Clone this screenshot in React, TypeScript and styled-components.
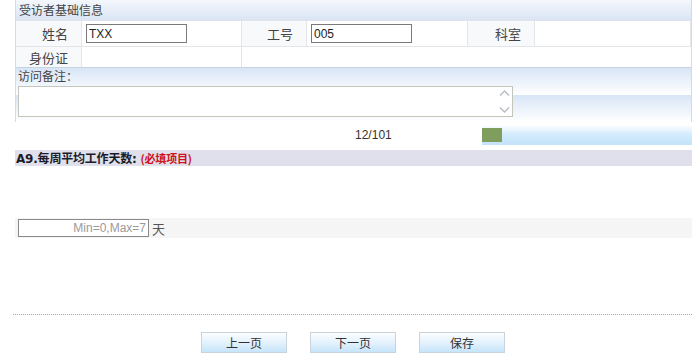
import React from 'react'
import styled, { createGlobalStyle } from 'styled-components'

const GlobalStyle = createGlobalStyle`
  html, body {
    margin: 0;
    padding: 0;
    background: #fff;
  }
  body {
    font-family: "Liberation Sans", "Noto Sans CJK SC", sans-serif;
    font-size: 12px;
    color: #333;
  }
`

const current = 12
const total = 101

const App = () => {
  return (
    <Page>
      <GlobalStyle />
      <Panel>
        <PanelTitle>受访者基础信息</PanelTitle>
        <InfoGrid>
          <Label>姓名</Label>
          <Value>
            <TextBox defaultValue="TXX" />
          </Value>
          <Label>工号</Label>
          <Value>
            <TextBox defaultValue="005" />
          </Value>
          <Label>科室</Label>
          <Value />
          <Label last>身份证</Label>
          <Value last />
          <Value last span={4} />
        </InfoGrid>
        <Remark>
          <RemarkTitle>访问备注：</RemarkTitle>
          <AreaBox>
            <Area />
            <ScrollCol>
              <svg width="11" height="8" viewBox="0 0 11 8">
                <path d="M1 6.5 L5.5 2 L10 6.5" fill="none" stroke="#b8bcc4" strokeWidth="1.4" />
              </svg>
              <svg width="11" height="8" viewBox="0 0 11 8">
                <path d="M1 1.5 L5.5 6 L10 1.5" fill="none" stroke="#b8bcc4" strokeWidth="1.4" />
              </svg>
            </ScrollCol>
          </AreaBox>
        </Remark>
      </Panel>

      <ProgressRow>
        <Count>
          {current}/{total}
        </Count>
        <Bar>
          <BarFill style={{ width: `${Math.round((current / total) * 170)}px` }} />
        </Bar>
      </ProgressRow>

      <Question>
        A9.每周平均工作天数:
        <Required>(必填项目)</Required>
      </Question>

      <AnswerRow>
        <NumBox placeholder="Min=0,Max=7" />
        <Unit>天</Unit>
      </AnswerRow>

      <Divider />

      <Buttons>
        <Btn>上一页</Btn>
        <Btn>下一页</Btn>
        <Btn>保存</Btn>
      </Buttons>
    </Page>
  )
}

export default App

const Page = styled.div`
  width: 700px;
  height: 358px;
  overflow: hidden;
`
const Panel = styled.div`
  margin: 0 8px 0 15px;
  border-left: 1px solid #d6d9de;
  border-right: 1px solid #d6d9de;
  border-bottom: 1px solid #d6d9de;
  height: 122px;
  box-sizing: border-box;
`
const PanelTitle = styled.div`
  height: 21px;
  line-height: 22px;
  padding-left: 3px;
  color: #444;
  background: linear-gradient(#f4f7fc, #dae5f4);
  border-bottom: 1px solid #dfe4ea;
  box-sizing: border-box;
`
const InfoGrid = styled.div`
  display: grid;
  grid-template-columns: 66px 160px 65px 161px 67px 1fr;
  grid-template-rows: 26px 21px;
`
const Label = styled.div<{ last?: boolean }>`
  display: flex;
  align-items: center;
  justify-content: flex-end;
  padding-right: 13px;
  font-size: 13px;
  color: #444;
  background: #f8f9fa;
  border-right: 1px solid #e3e5e8;
  border-bottom: 1px solid ${(p) => (p.last ? '#c9d3df' : '#e3e5e8')};
`
const Value = styled.div<{ last?: boolean; span?: number }>`
  display: flex;
  align-items: center;
  padding-left: 4px;
  background: #fff;
  border-right: 1px solid #e3e5e8;
  border-bottom: 1px solid ${(p) => (p.last ? '#c9d3df' : '#e3e5e8')};
  grid-column: ${(p) => (p.span ? `span ${p.span}` : 'auto')};
  &:last-child {
    border-right: none;
  }
`
const TextBox = styled.input`
  width: 101px;
  height: 19px;
  box-sizing: border-box;
  border: 1px solid #7a7a7a;
  padding: 0 2px;
  font-family: "Liberation Sans", "Noto Sans CJK SC", sans-serif;
  font-size: 12px;
  color: #222;
  outline: none;
`
const Remark = styled.div`
  height: 54px;
  background: linear-gradient(#d8e5f6, #ffffff) 0 0 / 100% 27px repeat-y;
`
const RemarkTitle = styled.div`
  height: 18px;
  line-height: 18px;
  padding-left: 2px;
  color: #444;
`
const AreaBox = styled.div`
  display: flex;
  width: 495px;
  height: 31px;
  margin-left: 2px;
  box-sizing: border-box;
  border: 1px solid #c3c6b8;
  background: #fff;
`
const Area = styled.textarea`
  flex: 1;
  border: none;
  resize: none;
  outline: none;
  padding: 0;
`
const ScrollCol = styled.div`
  width: 16px;
  display: flex;
  flex-direction: column;
  justify-content: space-between;
  align-items: center;
  padding: 2px 0;
`
const ProgressRow = styled.div`
  display: flex;
  align-items: center;
  height: 26px;
  margin: 0 8px 0 15px;
`
const Count = styled.div`
  width: 467px;
  padding-left: 340px;
  box-sizing: border-box;
  font-size: 12px;
  color: #333;
`
const Bar = styled.div`
  flex: 1;
  height: 20px;
  display: flex;
  align-items: center;
  background: linear-gradient(#ffffff, #d4ecfc 45%, #c2e3fa);
`
const BarFill = styled.div`
  height: 14px;
  background: #7f9e5e;
`
const Question = styled.div`
  margin: 2px 8px 0 15px;
  height: 16px;
  line-height: 16px;
  padding-left: 1px;
  background: #dfe0eb;
  font-weight: bold;
  font-size: 12px;
  color: #1b1b2a;
  font-family: "DejaVu Sans", "Noto Sans CJK SC", sans-serif;
  letter-spacing: -0.2px;
`
const Required = styled.span`
  margin-left: 4px;
  color: #d0101a;
  font-size: 11px;
  font-family: "Noto Sans CJK SC", sans-serif;
`
const AnswerRow = styled.div`
  display: flex;
  align-items: center;
  margin: 52px 8px 0 15px;
  height: 20px;
  background: #f5f5f5;
  padding-left: 3px;
`
const NumBox = styled.input`
  width: 131px;
  height: 18px;
  box-sizing: border-box;
  border: 1px solid #8a8a8a;
  text-align: right;
  padding: 0 2px;
  font-family: "Liberation Sans", sans-serif;
  font-size: 12px;
  outline: none;
  &::placeholder {
    color: #9a9a9a;
  }
`
const Unit = styled.span`
  margin-left: 3px;
  font-size: 13px;
  color: #555;
  font-family: "Noto Sans CJK SC", sans-serif;
`
const Divider = styled.div`
  margin: 76px 8px 0 13px;
  border-top: 1px dotted #a9a9a9;
`
const Buttons = styled.div`
  display: flex;
  justify-content: center;
  gap: 23px;
  padding-left: 6px;
  margin-top: 17px;
`
const Btn = styled.button`
  width: 86px;
  height: 21px;
  padding: 0;
  border: 1px solid #c9d3dc;
  background: linear-gradient(#fbfdff, #e4f2fd 50%, #c6e4fa);
  font-family: "Noto Sans CJK SC", sans-serif;
  font-size: 12px;
  color: #333;
`
